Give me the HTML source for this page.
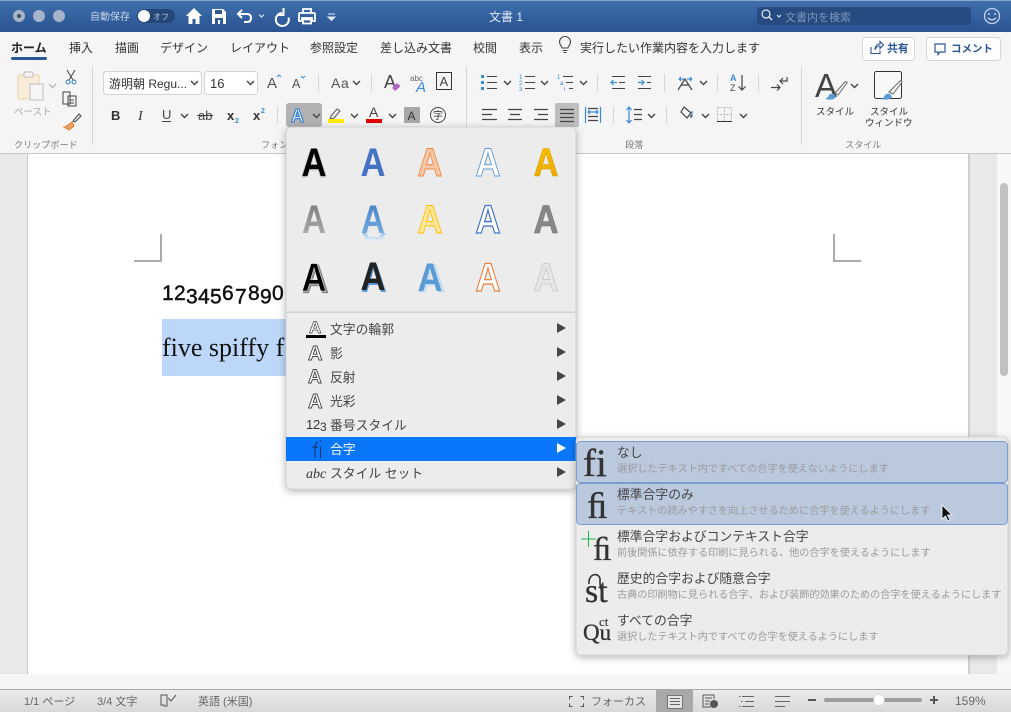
<!DOCTYPE html>
<html lang="ja"><head><meta charset="utf-8"><title>文書 1</title>
<style>
html,body{margin:0;padding:0;background:#e9e9e9;width:1011px;height:712px;overflow:hidden}
svg{display:block}
text{font-family:"Liberation Sans","Noto Sans CJK JP",sans-serif;font-size:11px;fill:#333}
.tab{font-size:12px;fill:#333}
.lb{font-size:9.1px;fill:#7a7a7a}
.m{font-size:12.8px;fill:#444}
.t{font-size:12.8px;fill:#444}
.d{font-size:10.15px;fill:#9a9a9a}
.st{font-size:11px;fill:#666}
.s{font-family:"Liberation Serif",serif;fill:#333;stroke:#333;stroke-width:.35}
.i{fill:none;stroke:#444;stroke-width:1.2}
.b{fill:none;stroke:#3a8ad6;stroke-width:1.2}
.g{font-size:40px;font-weight:bold;text-anchor:middle}
.a{font-weight:bold;fill:#fff;stroke:#444;stroke-width:.9}
</style></head><body>
<svg width="1011" height="712" viewBox="0 0 1011 712" xmlns="http://www.w3.org/2000/svg">
<defs>
<linearGradient id="tb" x1="0" y1="0" x2="0" y2="1"><stop offset="0" stop-color="#4070ad"/><stop offset="1" stop-color="#2a5392"/></linearGradient>
<linearGradient id="sb" x1="0" y1="0" x2="0" y2="1"><stop offset="0" stop-color="#ececec"/><stop offset="1" stop-color="#d8d8d8"/></linearGradient>
<linearGradient id="fade" x1="0" y1="0" x2="0" y2="1"><stop offset="0" stop-color="#777"/><stop offset="1" stop-color="#b5b5b5"/></linearGradient>
<linearGradient id="fb" x1="0" y1="0" x2="0" y2="1"><stop offset="0" stop-color="#3f7fc0"/><stop offset="1" stop-color="#7fb4e6"/></linearGradient>
<linearGradient id="fy" x1="0" y1="0" x2="0" y2="1"><stop offset="0" stop-color="#ffc000"/><stop offset="1" stop-color="#e8a800"/></linearGradient>
<linearGradient id="refl" x1="0" y1="0" x2="0" y2="1"><stop offset="0" stop-color="#9cc3ea"/><stop offset="1" stop-color="#eaf1f8"/></linearGradient>
<filter id="sh" x="-10%" y="-10%" width="120%" height="120%"><feDropShadow dx="0" dy="2" stdDeviation="4" flood-color="#000" flood-opacity=".3"/></filter>
<filter id="bl" x="-20%" y="-20%" width="140%" height="140%"><feGaussianBlur stdDeviation=".8"/></filter>
<path id="c" d="M0 0l3.500 3.500L7 0" fill="none" stroke="#444" stroke-width="1.400"/>
<path id="ar" d="M0 0l9 5-9 5z" fill="#444"/>
</defs>

<!-- title bar -->
<rect width="1011" height="32" fill="url(#tb)"/>
<rect width="1011" height="1" fill="#8aa6cc"/>
<circle cx="19" cy="16" r="6" fill="#a5b4ca"/><circle cx="19" cy="16" r="2" fill="#3e5068"/>
<circle cx="39" cy="16" r="6" fill="#a5b4ca"/><circle cx="59" cy="16" r="6" fill="#a5b4ca"/>
<text x="90" y="20" style="font-size:10px;fill:#c8d6ea">自動保存</text>
<rect x="137" y="9" width="38" height="14" rx="7" fill="#234878"/><circle cx="144" cy="16" r="6" fill="#fff"/>
<text x="153" y="19.500" style="font-size:8px;fill:#b6c6de">オフ</text>
<path d="M186 16l8-8 8 8h-2.500v8h-4v-5h-3v5h-4v-8z" fill="#fff"/>
<path d="M212 9h11l3 3v12h-14z" fill="#fff"/><rect x="215" y="10" width="7" height="4" fill="#2f5a99"/><rect x="215" y="18" width="8" height="6" fill="#2f5a99"/><rect x="218" y="20" width="2" height="4" fill="#fff"/>
<path d="M242 10l-4 4 4 4M238 14h9q4 0 4 4t-4 4h-3" fill="none" stroke="#fff" stroke-width="2"/>
<path d="M259 14.500l2.500 2.500 2.500-2.500" fill="none" stroke="#dce6f4" stroke-width="1.200"/>
<path d="M282 13a6.500 6.500 0 1 0 6.500 4.500M283.500 8v7h-6.500" fill="none" stroke="#fff" stroke-width="2"/>
<path d="M303 9h8v4h-8zM300 13h14q1 0 1 1v7h-3v-3h-10v3h-3v-7q0-1 1-1zM303 19.500h8v4h-8z" fill="none" stroke="#fff" stroke-width="1.800"/>
<path d="M328 14h7M328 17h7l-3.500 3.500z" fill="#dce6f4" stroke="#dce6f4"/>
<text x="489" y="21" style="font-size:12px;fill:#dfe8f4">文書 1</text>
<rect x="757" y="7" width="214" height="18" rx="3" fill="#264b80"/>
<circle cx="766" cy="14" r="4" fill="none" stroke="#e6edf6" stroke-width="1.200"/><path d="M769 17l3 3" stroke="#e6edf6" stroke-width="1.400"/><path d="M777 15l2 2 2-2" fill="none" stroke="#e6edf6"/>
<text x="785" y="21" style="font-size:11px;fill:#7e96ba">文書内を検索</text>
<circle cx="992" cy="16" r="7.500" fill="none" stroke="#c5d3e6" stroke-width="1.300"/><circle cx="989" cy="14" r="1" fill="#c5d3e6"/><circle cx="995" cy="14" r="1" fill="#c5d3e6"/><path d="M988 18q4 3.500 8 0" fill="none" stroke="#c5d3e6" stroke-width="1.200"/>

<!-- ribbon -->
<rect y="32" width="1011" height="122" fill="#f5f5f5"/>
<rect y="153" width="1011" height="1" fill="#c8c8c8"/>
<text x="11" y="52" class="tab" style="font-weight:bold;fill:#222">ホーム</text>
<rect x="11" y="57" width="36" height="3" rx="1.500" fill="#2b5797"/>
<text x="69" y="52" class="tab">挿入</text><text x="115" y="52" class="tab">描画</text><text x="160" y="52" class="tab">デザイン</text><text x="230" y="52" class="tab">レイアウト</text><text x="310" y="52" class="tab">参照設定</text><text x="380" y="52" class="tab">差し込み文書</text><text x="473" y="52" class="tab">校閲</text><text x="519" y="52" class="tab">表示</text>
<path d="M562 48c0-2-2.500-3-2.500-6a5.500 5.500 0 0 1 11 0c0 3-2.500 4-2.500 6zM562.500 50.500h5M563.500 52.500h3" fill="none" stroke="#444" stroke-width="1.100"/>
<text x="580" y="52" class="tab">実行したい作業内容を入力します</text>
<rect x="862.500" y="37.500" width="52" height="23" rx="3" fill="#fff" stroke="#d6d6d6"/>
<path d="M871 47v6.500h9v-3M875 50c0-4 2-6 5-6v-2.500l3.500 3.500-3.500 3.500V46c-2 0-4 1-5 4z" fill="none" stroke="#2b5797" stroke-width="1.100"/>
<text x="887" y="52" style="font-size:10.800px;font-weight:bold;fill:#2b5797">共有</text>
<rect x="926.500" y="37.500" width="74" height="23" rx="3" fill="#fff" stroke="#d6d6d6"/>
<path d="M935 44h10v8h-5l-2 2.500V52h-3z" fill="none" stroke="#2b5797" stroke-width="1.200"/>
<text x="951" y="52" style="font-size:10.500px;font-weight:bold;fill:#2b5797">コメント</text>

<!-- group separators -->
<g stroke="#d6d6d6"><path d="M92.500 66v79M466.500 66v79M801.500 66v79"/><path d="M318.500 74v18M371.500 74v18M277.500 106v18M597.500 74v18M664.500 74v18M717.500 74v18M758.500 74v18M613.500 106v18M666.500 106v18"/></g>

<!-- clipboard -->
<rect x="18" y="75" width="21" height="24" rx="1" fill="#f9ecd9" stroke="#ecd0a8"/><rect x="24" y="72" width="9" height="5" rx="1" fill="#f5f5f5" stroke="#bbb"/><rect x="30" y="84" width="13" height="16" fill="#f5f5f5" stroke="#bdbdbd"/>
<use href="#c" x="49" y="84" opacity=".35"/>
<text x="14" y="115" style="font-size:9.500px;fill:#aaa">ペースト</text>
<path d="M67 70l6 10M75 70l-6 10" stroke="#444" fill="none"/><circle cx="68" cy="82" r="2" fill="none" stroke="#2d7fc9"/><circle cx="74" cy="82" r="2" fill="none" stroke="#2d7fc9"/>
<path d="M63 92h7v12h-7zM68 96h8v10h-8z" fill="#f5f5f5" stroke="#444"/><path d="M70 100h4M70 103h4" stroke="#444"/>
<path d="M72 122l-7 5-1 0 5 3 5-4z" fill="#f0a060" stroke="#e08030"/><path d="M73 121l6-7 2 2-6 6z" fill="none" stroke="#444"/>
<text x="14" y="148" class="lb">クリップボード</text><text x="261" y="148" class="lb">フォン</text><text x="625" y="148" class="lb">段落</text><text x="845" y="148" class="lb">スタイル</text>

<!-- font row 1 -->
<rect x="103.500" y="71.500" width="98" height="23" rx="3" fill="#fff" stroke="#d4d4d4"/>
<text x="109" y="88" style="font-size:12px">游明朝 Regu...</text><use href="#c" x="191" y="81"/>
<rect x="204.500" y="71.500" width="53" height="23" rx="3" fill="#fff" stroke="#d4d4d4"/>
<text x="210" y="88" style="font-size:13px">16</text><use href="#c" x="247" y="81"/>
<text x="267" y="88" style="font-size:15px;fill:#555">A</text><path d="M277 77l2-2 2 2" fill="none" stroke="#3a8ad6"/>
<text x="292" y="88" style="font-size:12.500px;fill:#555">A</text><path d="M301 76l2 2 2-2" fill="none" stroke="#3a8ad6"/>
<text x="331" y="88" style="font-size:14px;letter-spacing:.6px;fill:#555">Aa</text><use href="#c" x="353" y="81"/>
<text x="384" y="88" style="font-size:18px;fill:#444">A</text><path d="M392 88l5-5 3.500 3-5 5z" fill="#b565c8"/>
<text x="410" y="81" style="font-size:8px;fill:#666">abc</text><text x="416" y="92" style="font-size:15px;font-style:italic;fill:#3a8ad6">A</text>
<rect x="436.500" y="72.500" width="15" height="17" fill="none" stroke="#333"/><text x="439.500" y="86" style="font-size:13px;fill:#444">A</text>

<!-- font row 2 -->
<text x="111" y="120" style="font-size:13px;font-weight:bold">B</text>
<text x="138" y="120" style="font-size:14px;font-style:italic;font-family:'Liberation Serif',serif">I</text>
<text x="162" y="119" style="font-size:13px;fill:#444">U</text><path d="M162 121.500h9" stroke="#444"/><use href="#c" x="181" y="114"/>
<text x="198" y="120" style="font-size:13px;fill:#444">ab</text><path d="M197 115.500h16" stroke="#444"/>
<text x="227" y="120" style="font-size:13px;font-weight:bold">x</text><text x="235" y="123" style="font-size:7px;font-weight:bold;fill:#3a8ad6">2</text>
<text x="253" y="120" style="font-size:13px;font-weight:bold">x</text><text x="261" y="113" style="font-size:7px;font-weight:bold;fill:#3a8ad6">2</text>
<rect x="286" y="103" width="36" height="24" rx="3" fill="#b2b2b2"/>
<text x="291" y="122" style="font-size:18px;font-weight:bold;fill:#e8f2fb;stroke:#1e78d2;stroke-width:1">A</text><use href="#c" x="313" y="114"/>
<path d="M331 116l6-7 3 2-6 7-4 1z" fill="none" stroke="#555"/><rect x="328" y="119" width="16" height="4" fill="#ffee00"/><use href="#c" x="351" y="114"/>
<text x="369" y="117" style="font-size:14px;fill:#444">A</text><rect x="366" y="119" width="16" height="4" fill="#e00000"/><use href="#c" x="389" y="114"/>
<rect x="404" y="107" width="16" height="16" fill="#a8a8a8"/><text x="407.500" y="120" style="font-size:12px;fill:#333">A</text>
<circle cx="438" cy="115" r="7.500" fill="none" stroke="#444"/><text x="433" y="119" style="font-size:10px">字</text>

<!-- paragraph row 1 -->
<g fill="#3a8ad6"><rect x="481" y="75" width="3" height="3"/><rect x="481" y="81" width="3" height="3"/><rect x="481" y="87" width="3" height="3"/></g>
<path d="M487 76.500h10M487 82.500h10M487 88.500h10" stroke="#444" fill="none"/><use href="#c" x="504" y="81"/>
<text x="519" y="79" style="font-size:6px;fill:#3a8ad6">1</text><text x="519" y="85" style="font-size:6px;fill:#3a8ad6">2</text><text x="519" y="91" style="font-size:6px;fill:#3a8ad6">3</text>
<path d="M525 76.500h10M525 82.500h10M525 88.500h10" stroke="#444"/><use href="#c" x="541" y="81"/>
<text x="557" y="79" style="font-size:6px;fill:#3a8ad6">1</text><text x="560" y="85" style="font-size:6px;fill:#3a8ad6">a</text><text x="564" y="91" style="font-size:6px;fill:#3a8ad6">i</text>
<path d="M563 76.500h10M566 82.500h7M569 88.500h4" stroke="#444"/><use href="#c" x="580" y="81"/>
<path d="M611 82.500h6M613.500 80l-2.500 2.500 2.500 2.500" class="b"/><path d="M612 76.500h13M619 82.500h6M612 88.500h13" stroke="#444"/>
<path d="M638 82.500h6M641.500 80l2.500 2.500-2.500 2.500" class="b"/><path d="M638 76.500h13M647 82.500h4M638 88.500h13" stroke="#444"/>
<path d="M678 90l7-11 7 11M681 85h8" class="i"/><path d="M679 79h5M679 79l2-2M679 79l2 2M687 79h5M692 79l-2-2M692 79l-2 2" class="b"/><use href="#c" x="700" y="81"/>
<text x="730" y="81" style="font-size:9px;font-weight:bold;fill:#3a8ad6">A</text><text x="730" y="91" style="font-size:9px;fill:#444">Z</text><path d="M742 75v15M738.500 86.500l3.500 3.500 3.500-3.500" class="i"/>
<path d="M771 87.500h9M777 84.500l3 3-3 3" class="i"/><path d="M787 77v4h-7M783 78l-3 3 3 3" class="i"/>

<!-- paragraph row 2 -->
<path d="M482 109.500h15M482 114.500h10M482 119.500h15" class="i"/>
<path d="M508 109.500h14M510 114.500h10M508 119.500h14" class="i"/>
<path d="M534 109.500h14M538 114.500h10M534 119.500h14" class="i"/>
<rect x="555" y="103" width="24" height="24" rx="2" fill="#bdbdbd"/><path d="M560 109.500h14M560 113.500h14M560 117.500h14M560 121.500h14" class="i"/>
<path d="M585.500 107v16M600.500 107v16M588 112h10M590 110l-2 2 2 2M596 110l2 2-2 2" class="b"/><path d="M588 116.500h10M588 120.500h10M588 108.500h10" class="i" stroke-width="1"/>
<path d="M629 107v16M626.500 110l2.500-3 2.500 3M626.500 120l2.500 3 2.500-3" class="b"/><path d="M634 109.500h8M634 114.500h8M634 119.500h8" class="i"/><use href="#c" x="648" y="114"/>
<path d="M684 107l7 6-4 5-6-6zM691 115v3" class="i"/><path d="M692 111v6" class="b"/><use href="#c" x="702" y="114"/>
<rect x="717.500" y="107.500" width="14" height="14" fill="none" stroke="#bbb" stroke-dasharray="2 1"/><path d="M717 114.500h15M724.500 107v15" stroke="#bbb" stroke-dasharray="2 1"/><path d="M717 121.500h15" stroke="#333"/><use href="#c" x="740" y="114"/>

<!-- styles -->
<text x="815" y="97" style="font-size:33px;fill:#444">A</text>
<path d="M835 93l10-11q2-1 2 1l-9 12z" fill="#f5f5f5" stroke="#666"/><path d="M825 99q3-1 4-4q2-2 5-1l2 3q-3 4-11 2z" fill="#5b9bd5"/>
<use href="#c" x="851" y="84"/>
<text x="816" y="115" style="font-size:9.500px">スタイル</text>
<rect x="874.500" y="71.500" width="27" height="27" rx="2" fill="#f8f8f8" stroke="#333"/>
<path d="M889 92l11-11q2-1 2 1l-9 12z" fill="#f5f5f5" stroke="#666"/><path d="M881 99q3-1 4-4q2-2 5-1l2 3q-3 4-11 2z" fill="#5b9bd5"/>
<text x="870" y="115" style="font-size:9.500px">スタイル</text><text x="865" y="126" style="font-size:9.500px">ウィンドウ</text>

<!-- document area -->
<rect y="154" width="1011" height="521" fill="#e9e9e9"/>
<rect x="28" y="154" width="940" height="520" fill="#fff"/>
<rect x="27" y="154" width="1" height="520" fill="#c9c9c9"/><rect x="968" y="154" width="2" height="520" fill="#d0d0d0"/>
<rect x="997" y="154" width="14" height="521" fill="#f8f8f8"/>
<rect x="1000" y="183" width="8" height="193" rx="4" fill="#c1c1c1"/>
<rect y="674" width="1011" height="15" fill="#f6f6f6"/>
<path d="M161 234v27h-27M834 234v27h27" fill="none" stroke="#ababab" stroke-width="2"/>
<text x="162" y="300" style="font-size:21px;fill:#111;stroke:#111;stroke-width:.45"><tspan x="162">1</tspan><tspan x="174">2</tspan><tspan x="186" dy="3.500">3</tspan><tspan x="198">4</tspan><tspan x="210">5</tspan><tspan x="222" dy="-3.500">6</tspan><tspan x="235" dy="3.500">7</tspan><tspan x="248" dy="-3.500">8</tspan><tspan x="260" dy="3.500">9</tspan><tspan x="272" dy="-3.500">0</tspan></text>
<rect x="162" y="319" width="126" height="57" fill="#bcd7f9"/>
<text x="162" y="356" style="font-family:'Liberation Serif',serif;font-size:26px;fill:#111">five spiffy f</text>

<!-- status bar -->
<rect y="689" width="1011" height="23" fill="url(#sb)"/><rect y="689" width="1011" height="1" fill="#a8a8a8"/>
<text x="24" y="705" class="st">1/1 ページ</text><text x="97" y="705" class="st">3/4 文字</text>
<path d="M161 695h6v11h-3v-1h-3zM167 695v11M168 698l3 3 5-6" fill="none" stroke="#555"/>
<text x="198" y="705" class="st">英語 (米国)</text>
<path d="M569.500 699.500v-3h3M580.500 696.500h3v3M583.500 703.500v3h-3M572.500 706.500h-3v-3" fill="none" stroke="#555"/>
<text x="591" y="705" class="st">フォーカス</text>
<rect x="656" y="689" width="37" height="23" fill="#a9a9a9"/><rect x="667.500" y="695.500" width="15" height="13" fill="#e5e5e5" stroke="#777"/><path d="M670 698.500h10M670 701.500h10M670 704.500h10" stroke="#666"/>
<path d="M703 695h11v4M703 695v12h8M705 698h7M705 701h5M705 704h4" fill="none" stroke="#555"/><circle cx="714" cy="704" r="4" fill="#555"/>
<path d="M742 696.500h12M745 701.500h9M742 706.500h12" stroke="#666"/><path d="M739 696.500h1.500M739 706.500h1.500M741 701.500h1.500" stroke="#666"/>
<path d="M775 696.500h15M775 701.500h15M775 706.500h10" stroke="#666"/>
<rect x="808" y="699" width="8" height="2" fill="#555"/>
<rect x="824" y="698" width="98" height="4" rx="2" fill="#9e9e9e"/><circle cx="879" cy="700" r="5.500" fill="#fff" stroke="#ccc" stroke-width=".5"/>
<path d="M930 700h8M934 696v8" stroke="#555" stroke-width="2"/>
<text x="955" y="705" style="font-size:12px;fill:#666">159%</text>

<!-- text effects menu -->
<rect x="286" y="127" width="290" height="362" rx="5" fill="#ececec" stroke="#c4c4c4" stroke-width=".6" filter="url(#sh)"/>
<!-- row 1 -->
<g filter="url(#bl)" opacity=".55"><text x="314" y="177" class="g" textLength="26" lengthAdjust="spacingAndGlyphs" style="fill:#555">A</text></g>
<text x="314" y="176" class="g" textLength="25" lengthAdjust="spacingAndGlyphs" style="fill:#000">A</text>
<text x="373" y="176" class="g" textLength="25" lengthAdjust="spacingAndGlyphs" style="fill:#4472c4">A</text>
<text x="430" y="176" class="g" textLength="25" lengthAdjust="spacingAndGlyphs" style="fill:#f7c6a5;stroke:#ed8b4a;stroke-width:1">A</text>
<text x="488" y="176" class="g" textLength="25" lengthAdjust="spacingAndGlyphs" style="fill:#fff;stroke:#5b9bd5;stroke-width:1">A</text>
<text x="546" y="176" class="g" textLength="25" lengthAdjust="spacingAndGlyphs" style="fill:url(#fy);stroke:#d39e00;stroke-width:.6">A</text>
<!-- row 2 -->
<text x="314" y="233" class="g" textLength="24" lengthAdjust="spacingAndGlyphs" style="fill:url(#fade)">A</text>
<text x="373" y="233" class="g" textLength="24" lengthAdjust="spacingAndGlyphs" style="fill:url(#fb)">A</text>
<path d="M362 233l5 8h14l5-8h-4l-3 4h-10l-3-4z" fill="url(#refl)"/>
<text x="430" y="233" class="g" textLength="25" lengthAdjust="spacingAndGlyphs" style="fill:#ffe699;stroke:#ffc000;stroke-width:1">A</text>
<text x="488" y="233" class="g" textLength="25" lengthAdjust="spacingAndGlyphs" style="fill:#fff;stroke:#4472c4;stroke-width:1.300">A</text>
<text x="546" y="233" class="g" textLength="25" lengthAdjust="spacingAndGlyphs" style="fill:#888;stroke:#6e6e6e;stroke-width:.6">A</text>
<!-- row 3 -->
<text x="315.500" y="292.500" class="g" textLength="26" lengthAdjust="spacingAndGlyphs" style="fill:#888;stroke:#888;stroke-width:1.200">A</text>
<text x="314" y="291" class="g" textLength="25" lengthAdjust="spacingAndGlyphs" style="fill:#000;stroke:#fff;stroke-width:.5">A</text>
<text x="374" y="292" class="g" textLength="26" lengthAdjust="spacingAndGlyphs" style="fill:#5b9bd5">A</text>
<text x="373" y="290" class="g" textLength="25" lengthAdjust="spacingAndGlyphs" style="fill:#222">A</text>
<text x="432" y="292" class="g" textLength="26" lengthAdjust="spacingAndGlyphs" style="fill:#cfe2f5;stroke:#a9cbea;stroke-width:.6">A</text>
<text x="430" y="291" class="g" textLength="25" lengthAdjust="spacingAndGlyphs" style="fill:#5b9bd5">A</text>
<text x="488" y="291" class="g" textLength="25" lengthAdjust="spacingAndGlyphs" style="fill:#fff;stroke:#ed7d31;stroke-width:1.200">A</text>
<text x="546" y="291" class="g" textLength="25" lengthAdjust="spacingAndGlyphs" style="fill:#e6e6e6;stroke:#b8b8b8;stroke-width:.6">A</text>
<rect x="286.500" y="311.500" width="289" height="1.500" fill="#d2d2d2"/>

<!-- menu rows -->
<rect x="286" y="437" width="290" height="24" fill="#0a77fb"/>
<text x="309" y="333" class="a" style="font-size:17px;stroke-width:.7">A</text><rect x="306" y="335" width="20" height="3" fill="#000"/>
<text x="308" y="360" class="a" style="font-size:20px">A</text>
<text x="308" y="383" class="a" style="font-size:19px">A</text>
<text x="308" y="408" class="a" style="font-size:20px">A</text>
<text x="306" y="429" style="font-size:13px;fill:#333">1</text><text x="313" y="429" style="font-size:13px;fill:#333">2</text><text x="320" y="431" style="font-size:12px;fill:#333">3</text>
<path d="M315 458v-11q0-4 3-5M312 447h6M320.500 447v11" fill="none" stroke="#14305c" stroke-width="1"/><circle cx="320.500" cy="441" r=".8" fill="#14305c"/>
<text x="306" y="478" style="font-family:'Liberation Serif',serif;font-style:italic;font-size:14px;fill:#333">abc</text>
<text x="330" y="334" class="m">文字の輪郭</text><text x="330" y="358" class="m">影</text><text x="330" y="382" class="m">反射</text><text x="330" y="406" class="m">光彩</text><text x="330" y="430" class="m">番号スタイル</text>
<text x="330" y="454" class="m" style="fill:#fff">合字</text><text x="330" y="478" class="m">スタイル セット</text>
<use href="#ar" x="557" y="323"/><use href="#ar" x="557" y="347"/><use href="#ar" x="557" y="371"/><use href="#ar" x="557" y="395"/><use href="#ar" x="557" y="419"/><path d="M557 443l9 5-9 5z" fill="#fff"/><use href="#ar" x="557" y="467"/>

<!-- ligature submenu -->
<rect x="576" y="437" width="432" height="218" rx="5" fill="#ececec" stroke="#c4c4c4" stroke-width=".6" filter="url(#sh)"/>
<rect x="576.500" y="441.500" width="431" height="41" rx="4" fill="#bbc9de" stroke="#7a9cd0"/>
<rect x="576.500" y="483.500" width="431" height="41" rx="4" fill="#bbc9de" stroke="#7a9cd0"/>
<text x="583" y="476" class="s" style="font-size:39px">f</text><text x="596" y="476" class="s" style="font-size:39px">i</text>
<text x="587" y="518" class="s" style="font-size:37px">&#xFB01;</text>
<path d="M581 539h15M588.500 531v16" stroke="#1fb04c" stroke-width="1"/>
<text x="593" y="560" class="s" style="font-size:33px">&#xFB01;</text>
<text x="585" y="602" class="s" style="font-size:34px">st</text><path d="M589 584c-1-12 12-12 11-3 0 3 0 6 1 8" fill="none" stroke="#333" stroke-width="1.600"/>
<text x="583" y="640" class="s" style="font-size:23px">Qu</text><text x="599" y="626" class="s" style="font-size:13px;stroke-width:.1">ct</text>
<text x="617" y="457" class="t">なし</text><text x="617" y="472" class="d">選択したテキスト内ですべての合字を使えないようにします</text>
<text x="617" y="499" class="t">標準合字のみ</text><text x="617" y="514" class="d">テキストの読みやすさを向上させるために合字を使えるようにします</text>
<text x="617" y="541" class="t">標準合字およびコンテキスト合字</text><text x="617" y="556" class="d">前後関係に依存する印刷に見られる、他の合字を使えるようにします</text>
<text x="617" y="583" class="t">歴史的合字および随意合字</text><text x="617" y="598" class="d">古典の印刷物に見られる合字、および装飾的効果のための合字を使えるようにします</text>
<text x="617" y="625" class="t">すべての合字</text><text x="617" y="640" class="d">選択したテキスト内ですべての合字を使えるようにします</text>
<!-- cursor -->
<path d="M942 505v14l3.500-3 2.500 5 2-1-2.500-5h4.500z" fill="#111" stroke="#fff" stroke-width=".8"/>
</svg>
</body></html>
